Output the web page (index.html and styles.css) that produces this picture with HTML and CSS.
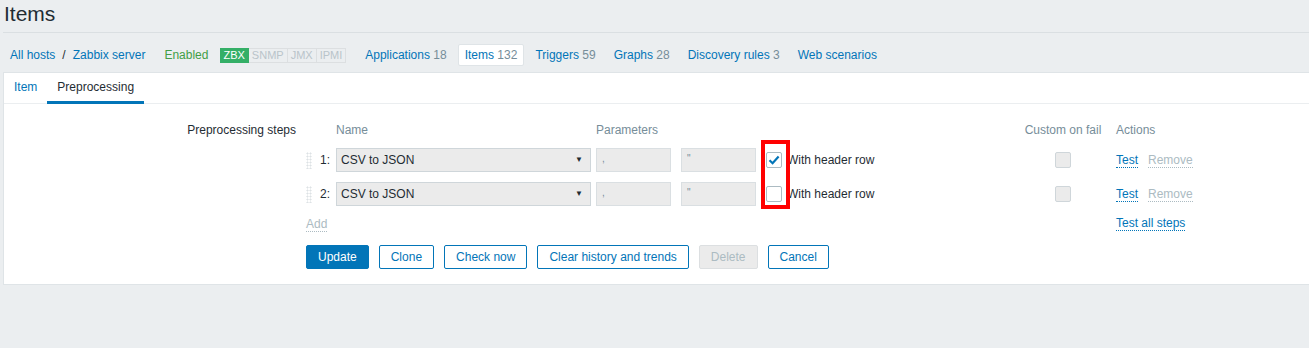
FILE: index.html
```html
<!DOCTYPE html>
<html lang="en">
<head>
<meta charset="UTF-8">
<title>Items</title>
<link rel="stylesheet" href="styles.css">
</head>
<body>
    <div class="header">
        <h1>Items</h1>
    </div>

    <div class="host-nav">
        <a class="link" href="#">All hosts</a>
        <span class="sep">/</span>
        <a class="link" href="#">Zabbix server</a>
        <span class="status">Enabled</span>
        <span class="badges">
            <span class="badge on">ZBX</span><span class="badge">SNMP</span><span class="badge">JMX</span><span class="badge">IPMI</span>
        </span>
        <a class="nav-item" href="#">Applications <span class="count">18</span></a>
        <a class="nav-item selected" href="#">Items <span class="count">132</span></a>
        <a class="nav-item" href="#">Triggers <span class="count">59</span></a>
        <a class="nav-item" href="#">Graphs <span class="count">28</span></a>
        <a class="nav-item" href="#">Discovery rules <span class="count">3</span></a>
        <a class="nav-item" href="#">Web scenarios</a>
    </div>

    <div class="container">
        <div class="tabs">
            <a class="tab" href="#">Item</a>
            <a class="tab active" href="#">Preprocessing</a>
        </div>

        <div class="form">
            <div class="form-label">Preprocessing steps</div>
            <div class="form-field">
                <div class="steps">
                    <div class="th"></div>
                    <div class="th">Name</div>
                    <div class="th">Parameters</div>
                    <div class="th center">Custom on fail</div>
                    <div class="th">Actions</div>

                    <div class="step-num"><span class="drag"></span>1:</div>
                    <div><div class="select">CSV to JSON<span class="arrow">&#9660;</span></div></div>
                    <div class="params">
                        <span class="input">,</span>
                        <span class="input">"</span>
                        <span class="checkbox checked"><svg width="12" height="10" viewBox="0 0 12 10"><path d="M1.5 5.2 L4.6 8.2 L10.6 1.6" fill="none" stroke="#0275b8" stroke-width="2.2"/></svg></span>
                        <span class="check-label">With header row</span>
                    </div>
                    <div class="center"><span class="checkbox disabled"></span></div>
                    <div class="actions"><a class="dotted" href="#">Test</a><span class="dotted grey">Remove</span></div>

                    <div class="step-num"><span class="drag"></span>2:</div>
                    <div><div class="select">CSV to JSON<span class="arrow">&#9660;</span></div></div>
                    <div class="params">
                        <span class="input">,</span>
                        <span class="input">"</span>
                        <span class="checkbox"></span>
                        <span class="check-label">With header row</span>
                    </div>
                    <div class="center"><span class="checkbox disabled"></span></div>
                    <div class="actions"><a class="dotted" href="#">Test</a><span class="dotted grey">Remove</span></div>

                    <div></div>
                    <div class="add-cell"><span class="dotted grey">Add</span></div>
                    <div></div>
                    <div></div>
                    <div class="actions"><a class="dotted" href="#">Test all steps</a></div>
                </div>

                <div class="buttons">
                    <button class="btn primary">Update</button>
                    <button class="btn">Clone</button>
                    <button class="btn">Check now</button>
                    <button class="btn">Clear history and trends</button>
                    <button class="btn" disabled>Delete</button>
                    <button class="btn">Cancel</button>
                </div>
            </div>
        </div>
    </div>

    <div class="highlight"></div>
</body>
</html>
```

FILE: styles.css
```css
body {
    margin: 0;
    background-color: #ebeef0;
    color: #1f2c33;
    font-family: "Liberation Sans", Arial, sans-serif;
    font-size: 12px;
    overflow: hidden;
    position: relative;
}
a {
    color: #0275b8;
    text-decoration: none;
}
.header {
    margin-left: 3px;
    height: 32px;
    border-bottom: 1px solid #dadfe2;
}
.header h1 {
    margin: 0;
    padding-left: 1px;
    font-size: 21px;
    font-weight: normal;
    line-height: 28px;
}

.host-nav {
    display: flex;
    align-items: center;
    height: 22px;
    padding: 11px 0 6px 10px;
    line-height: 22px;
}
.sep {
    margin: 0 7px;
}
.status {
    color: #429e47;
    margin-left: 19px;
}
.badges {
    display: flex;
    margin-left: 12px;
    margin-right: 12px;
}
.badge {
    height: 13px;
    line-height: 13px;
    padding: 0 3px;
    border: 1px solid #dcdfe1;
    border-left: none;
    color: #b9c4ca;
    font-size: 11px;
}
.badge.on {
    background-color: #34af67;
    border-color: #34af67;
    color: #fff;
}
.nav-item {
    padding: 0 6px;
    margin-right: 4px;
    height: 20px;
    line-height: 20px;
    border: 1px solid transparent;
    border-radius: 2px;
}
.nav-item.selected {
    background-color: #fff;
    border-color: #dfe4e7;
}
.count {
    color: #768d99;
}

.container {
    margin: 0 -6px 0 3px;
    background-color: #fff;
    border: 1px solid #dfe4e7;
}
.tabs {
    display: flex;
    height: 30px;
    border-bottom: 1px solid #ebeef0;
}
.tab {
    display: block;
    padding: 0 10px;
    line-height: 28px;
    height: 28px;
    border-bottom: 3px solid transparent;
}
.tab.active {
    color: #1f2c33;
    border-bottom-color: #0275b8;
}

.form {
    display: grid;
    grid-template-columns: 292px 1fr;
    column-gap: 10px;
    padding: 19px 0 15px 0;
}
.form-label {
    text-align: right;
    line-height: 14px;
}
.steps {
    display: grid;
    grid-template-columns: 30px 260px 422px 98px auto;
    row-gap: 10px;
    align-items: center;
}
.th {
    color: #768d99;
    line-height: 14px;
    margin-bottom: 1px;
}
.center {
    text-align: center;
    padding-right: 8px;
    display: flex;
    justify-content: center;
}
.th.center {
    display: block;
}
.step-num {
    display: flex;
    align-items: center;
    justify-content: space-between;
    padding-right: 6px;
    height: 24px;
}
.drag {
    width: 6px;
    height: 17px;
    background: radial-gradient(circle, #dde2e5 45%, transparent 50%) 0 0 / 3px 3px;
}
.select {
    position: relative;
    height: 22px;
    line-height: 22px;
    padding-left: 4px;
    width: 249px;
    background-color: #ebebeb;
    border: 1px solid #cfd6da;
}
.arrow {
    position: absolute;
    right: 7px;
    top: 0;
    font-size: 8px;
}
.params {
    display: flex;
    align-items: center;
}
.input {
    width: 68px;
    height: 22px;
    line-height: 20px;
    padding-left: 5px;
    margin-right: 10px;
    background-color: #ebebeb;
    border: 1px solid #dadfe2;
    color: #768d99;
    font-size: 10px;
}
.checkbox {
    display: inline-flex;
    align-items: center;
    justify-content: center;
    width: 14px;
    height: 14px;
    border: 1px solid #acbbc2;
    border-radius: 2px;
    background-color: #fff;
}
.checkbox.disabled {
    background-color: #ebebeb;
    border-color: #cfd6da;
}
.check-label {
    margin-left: 5px;
}
.actions {
    display: flex;
    gap: 10px;
}
.dotted {
    border-bottom: 1px dotted #0275b8;
    line-height: 14px;
}
.dotted.grey {
    color: #acbbc2;
    border-bottom-color: #acbbc2;
}
.add-cell {
    margin-left: -30px;
}

.buttons {
    display: flex;
    gap: 10px;
    margin-top: 14px;
}
.btn {
    height: 24px;
    padding: 0 11px;
    font-family: "Liberation Sans", Arial, sans-serif;
    font-size: 12px;
    color: #0275b8;
    background-color: #fff;
    border: 1px solid #0275b8;
    border-radius: 2px;
}
.btn.primary {
    background-color: #0275b8;
    color: #fff;
}
.btn:disabled {
    background-color: #ebebeb;
    border-color: #dcdfe1;
    color: #acbbc2;
}

.highlight {
    position: absolute;
    left: 761px;
    top: 140px;
    width: 21px;
    height: 61px;
    border: 4px solid #ff0000;
}
```
